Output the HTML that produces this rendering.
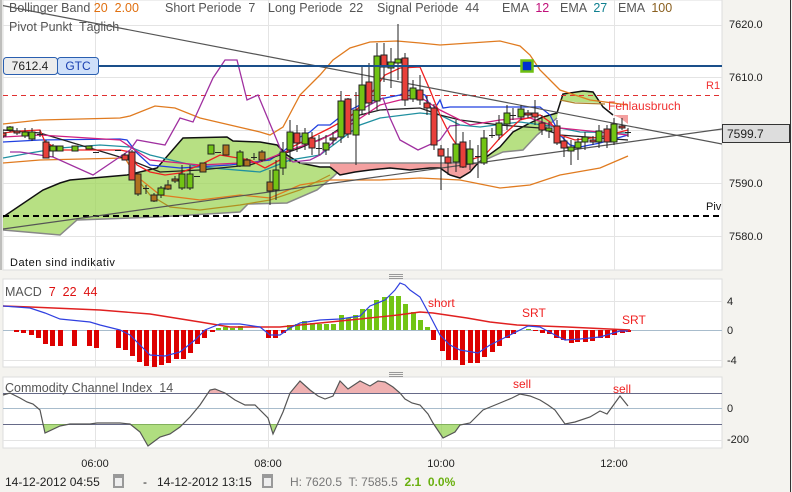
<!DOCTYPE html>
<html><head><meta charset="utf-8"><style>
html,body{margin:0;padding:0;background:#f4f3ef;}
svg{display:block;font-family:"Liberation Sans",sans-serif;}
text{white-space:pre;}
</style></head><body>
<svg width="792" height="492" viewBox="0 0 792 492" xmlns="http://www.w3.org/2000/svg" xml:space="preserve">
<defs>
<clipPath id="main"><rect x="3" y="0" width="719" height="270"/></clipPath>
<clipPath id="cciUp"><rect x="3" y="377" width="719" height="16"/></clipPath>
<clipPath id="cciDn"><rect x="3" y="424" width="719" height="24"/></clipPath>
</defs>
<rect width="792" height="492" fill="#f4f3ef"/>
<line x1="790.5" y1="0" x2="790.5" y2="492" stroke="#333"/>
<rect x="3" y="0" width="719" height="270" fill="#fff" stroke="#ddd"/>
<rect x="3" y="279" width="719" height="88" fill="#fff" stroke="#ddd"/>
<rect x="3" y="377" width="719" height="71" fill="#fff" stroke="#ddd"/>
<line x1="1" y1="0" x2="1" y2="270" stroke="#888"/>
<g stroke="#e4e4e4" stroke-width="1">
<line x1="95.5" y1="0" x2="95.5" y2="270"/><line x1="268.5" y1="0" x2="268.5" y2="270"/><line x1="441.5" y1="0" x2="441.5" y2="270"/><line x1="614.5" y1="0" x2="614.5" y2="270"/>
<line x1="95.5" y1="279" x2="95.5" y2="367"/><line x1="268.5" y1="279" x2="268.5" y2="367"/><line x1="441.5" y1="279" x2="441.5" y2="367"/><line x1="614.5" y1="279" x2="614.5" y2="367"/>
<line x1="95.5" y1="377" x2="95.5" y2="448"/><line x1="268.5" y1="377" x2="268.5" y2="448"/><line x1="441.5" y1="377" x2="441.5" y2="448"/><line x1="614.5" y1="377" x2="614.5" y2="448"/>
<line x1="3" y1="25.5" x2="722" y2="25.5"/><line x1="3" y1="77.5" x2="722" y2="77.5"/><line x1="3" y1="130.5" x2="722" y2="130.5"/><line x1="3" y1="183.5" x2="722" y2="183.5"/><line x1="3" y1="236.5" x2="722" y2="236.5"/>
<line x1="3" y1="301.5" x2="722" y2="301.5"/><line x1="3" y1="360.5" x2="722" y2="360.5"/>
<line x1="3" y1="440.5" x2="722" y2="440.5"/>
</g>
<g clip-path="url(#main)">
<polygon fill="#9fd55a" fill-opacity="0.75" points="3,217 43,190 60,183 70,180 127,175 157,168 183,138 227,137 233,141 260,142 277,145 287,155 300,163 320,167 335,167 340,170 333,177 317,190 287,203 248,204 240,212 157,217 77,220 60,235 3,230"/>
<polyline fill="none" stroke="#111" stroke-width="1.5" points="3,217 43,190 60,183 70,180 127,175 157,168 183,138 227,137 233,141 260,142 277,145 287,155 300,163 320,167 335,167"/>
<polyline fill="none" stroke="#888" stroke-width="1.5" points="3,230 60,235 77,220 157,217 240,212 248,204 287,203 317,190 333,177 340,170"/>
<polygon fill="#f4a0a0" points="330,163 478,163 470,172 460,178 450,175 440,168 410,170 390,168 370,170 355,172 340,175 330,167"/>
<polyline fill="none" stroke="#111" stroke-width="1.5" points="330,167 340,175 355,172 370,170 390,168 410,170 430,168 440,168 450,175 460,178 470,172 478,163"/>
<polygon fill="#9fd55a" fill-opacity="0.75" points="478,163 500,147 513,132 530,123 543,117 557,113 563,94 583,91 593,92 603,107 613,115 600,103 575,102 560,100 557,118 537,135 523,150 503,152"/>
<polyline fill="none" stroke="#111" stroke-width="1.5" points="478,163 500,147 513,132 530,123 543,117 557,113 563,94 583,91 593,92 603,107 613,115"/>
<polyline fill="none" stroke="#888" stroke-width="1.5" points="300,163 478,163 503,152 523,150 537,135 557,118"/>
<polygon fill="#f4a0a0" points="613,115 628,115 628,124 620,118"/>
<line x1="3" y1="95.5" x2="722" y2="95.5" stroke="#e03030" stroke-dasharray="5,4"/>
<line x1="3" y1="216" x2="722" y2="216" stroke="#000" stroke-width="2" stroke-dasharray="6,4"/>
<polyline fill="none" stroke="#e07b20" stroke-width="1.3" points="3,124 40,120 120,118 130,116 155,106 175,108 200,118 230,125 260,132 270,135 283,127 300,95 320,75 333,60 350,48 370,42 397,41 420,43 440,45 470,43 500,41 520,46 530,55 540,70 560,90 590,100 628,105"/>
<polyline fill="none" stroke="#e07b20" stroke-width="1.3" points="3,163 40,160 125,158 135,175 160,195 200,200 240,195 270,198 300,185 330,180 380,180 420,178 460,180 500,188 530,185 560,175 600,168 628,156"/>
<polyline fill="none" stroke="#b09020" stroke-width="1.2" points="130,170 150,195 170,207 200,210 240,205 270,200 300,190 330,175"/>
<polyline fill="none" stroke="#b08030" stroke-width="1.2" points="560,100 575,103 605,104"/>
<polyline fill="none" stroke="#2090a0" stroke-width="1.3" points="3,158 30,153 60,148 100,145 130,147 150,155 200,167 260,172 290,160 320,155 340,140 360,125 380,118 420,113 440,115 460,125 480,127 520,122 550,126 580,132 628,133"/>
<polyline fill="none" stroke="#2040e0" stroke-width="1.3" points="3,142 40,140 120,139 127,140 137,153 150,165 180,168 230,165 270,160 285,150 300,137 310,132 318,125 330,125 340,117 350,110 360,105 375,100 400,95 410,90 425,95 432,110 437,105 440,100 443,108 450,107 540,107 550,115 560,135 570,145 580,147 600,143 628,135"/>
<polyline fill="none" stroke="#222" stroke-width="1.3" points="3,130 40,133 130,160 160,172 200,170 250,165 280,155 300,148 330,135 360,115 380,110 420,108 440,115 460,120 500,125 540,128 560,135 600,138 628,140"/>
<polyline fill="none" stroke="#d02080" stroke-width="1.3" points="3,137 40,135 120,140 150,160 200,165 260,162 290,150 320,140 350,125 380,105 400,100 420,97 440,110 470,125 500,120 530,118 560,128 628,135"/>
<polyline fill="none" stroke="#f02020" stroke-width="1.3" points="3,133 20,131 40,130 45,142 60,150 120,150 130,152 137,165 150,172 165,175 180,173 200,165 220,155 250,160 265,168 280,160 290,148 310,138 330,128 350,117 370,95 385,75 400,68 420,67 430,90 440,115 450,135 460,150 470,160 485,155 500,138 520,120 540,115 550,122 560,135 575,140 600,137 628,130"/>
<polyline fill="none" stroke="#a030a0" stroke-width="1.3" points="10,152 20,152 53,157 93,175 130,150 137,140 165,145 180,118 193,122 213,78 225,60 237,60 247,100 258,95 283,155 293,162 310,160 320,155 340,135 360,110 383,98 390,118 400,140 418,150 440,140 450,126 460,125"/>
<line x1="0" y1="5" x2="722" y2="144" stroke="#555" stroke-width="1.2"/>
<line x1="3" y1="229" x2="722" y2="129" stroke="#555" stroke-width="1.2"/>
<g stroke="#222" stroke-width="1">
<line x1="3" y1="130" x2="3" y2="138"/><rect x="0" y="133" width="6" height="3" fill="#e8403a"/>
<line x1="10" y1="126" x2="10" y2="132"/><rect x="7" y="127" width="6" height="3" fill="#72c414"/>
<line x1="17" y1="128" x2="17" y2="135"/><rect x="14" y="131" width="6" height="2" fill="#e8403a"/>
<line x1="25" y1="128" x2="25" y2="138"/><rect x="22" y="132" width="6" height="4" fill="#72c414"/>
<line x1="32" y1="128" x2="32" y2="141"/><rect x="29" y="132" width="6" height="7" fill="#72c414"/>
<line x1="40" y1="130" x2="40" y2="137"/><line x1="37" y1="134.5" x2="43" y2="134.5"/>
<line x1="46" y1="140" x2="46" y2="158"/><rect x="43" y="142" width="6" height="16" fill="#e8403a"/>
<line x1="53" y1="144" x2="53" y2="157"/><rect x="50" y="146" width="6" height="5" fill="#72c414"/>
<rect x="57" y="146" width="6" height="5" fill="#72c414"/>
<rect x="72" y="146" width="6" height="5" fill="#72c414"/>
<rect x="86" y="146" width="6" height="3" fill="#72c414"/>
<line x1="93" y1="152.5" x2="99" y2="152.5"/><line x1="115" y1="150.5" x2="121" y2="150.5"/>
<line x1="125" y1="153" x2="125" y2="160"/><rect x="122" y="155" width="6" height="5" fill="#e8403a"/>
<line x1="132" y1="150" x2="132" y2="180"/><rect x="129" y="152" width="6" height="28" fill="#e8403a"/>
<line x1="138" y1="172" x2="138" y2="196"/><rect x="135" y="174" width="6" height="20" fill="#b07020"/>
<line x1="146" y1="185" x2="146" y2="194"/><line x1="143" y1="188.5" x2="149" y2="188.5"/>
<line x1="154" y1="193" x2="154" y2="202"/><rect x="151" y="195" width="6" height="6" fill="#b07020"/>
<line x1="161" y1="186" x2="161" y2="198"/><rect x="158" y="188" width="6" height="7" fill="#72c414"/>
<line x1="168" y1="180" x2="168" y2="190"/><rect x="165" y="185" width="6" height="4" fill="#b07020"/>
<line x1="175" y1="176" x2="175" y2="183"/><rect x="172" y="179" width="6" height="2" fill="#b07020"/>
<line x1="182" y1="165" x2="182" y2="190"/><rect x="179" y="174" width="6" height="14" fill="#72c414"/>
<line x1="190" y1="165" x2="190" y2="190"/><rect x="187" y="174" width="6" height="14" fill="#72c414"/>
<line x1="194" y1="176.5" x2="200" y2="176.5"/>
<rect x="200" y="163" width="6" height="9" fill="#b07020"/>
<rect x="208" y="145" width="6" height="9" fill="#72c414"/>
<line x1="215" y1="152.5" x2="221" y2="152.5"/>
<rect x="223" y="145" width="6" height="10" fill="#b07020"/>
<line x1="240" y1="150" x2="240" y2="167"/><rect x="237" y="152" width="6" height="14" fill="#72c414"/>
<line x1="247" y1="158" x2="247" y2="166"/><rect x="244" y="160" width="6" height="6" fill="#b07020"/>
<line x1="254" y1="153" x2="254" y2="160"/><line x1="251" y1="157.5" x2="257" y2="157.5"/>
<line x1="262" y1="150" x2="262" y2="162"/><rect x="259" y="152" width="6" height="8" fill="#b07020"/>
<line x1="270" y1="170" x2="270" y2="205"/><rect x="267" y="182" width="6" height="9" fill="#b07020"/>
<line x1="276" y1="160" x2="276" y2="200"/><rect x="273" y="170" width="6" height="20" fill="#72c414"/>
<line x1="283" y1="142" x2="283" y2="175"/><rect x="280" y="152" width="6" height="16" fill="#72c414"/>
<line x1="290" y1="120" x2="290" y2="162"/><rect x="287" y="132" width="6" height="18" fill="#72c414"/>
<line x1="297" y1="125" x2="297" y2="152"/><rect x="294" y="133" width="6" height="10" fill="#e8403a"/>
<line x1="305" y1="128" x2="305" y2="150"/><rect x="302" y="133" width="6" height="11" fill="#72c414"/>
<line x1="312" y1="132" x2="312" y2="155"/><rect x="309" y="138" width="6" height="10" fill="#e8403a"/>
<line x1="319" y1="135" x2="319" y2="155"/><line x1="316" y1="148.5" x2="322" y2="148.5"/>
<line x1="326" y1="135" x2="326" y2="155"/><rect x="323" y="143" width="6" height="7" fill="#72c414"/>
<line x1="333" y1="132" x2="333" y2="145"/><rect x="330" y="138" width="6" height="2" fill="#b07020"/>
<line x1="341" y1="91" x2="341" y2="143"/><rect x="338" y="101" width="6" height="36" fill="#72c414"/>
<line x1="348" y1="98" x2="348" y2="138"/><rect x="345" y="99" width="6" height="35" fill="#e8403a"/>
<line x1="356" y1="92" x2="356" y2="165"/><rect x="353" y="110" width="6" height="25" fill="#72c414"/>
<line x1="362" y1="65" x2="362" y2="115"/><rect x="359" y="85" width="6" height="25" fill="#72c414"/>
<line x1="369" y1="63" x2="369" y2="115"/><rect x="366" y="82" width="6" height="21" fill="#e8403a"/>
<line x1="377" y1="43" x2="377" y2="110"/><rect x="374" y="56" width="6" height="45" fill="#72c414"/>
<line x1="384" y1="43" x2="384" y2="82"/><rect x="381" y="55" width="6" height="12" fill="#e8403a"/>
<line x1="391" y1="48" x2="391" y2="88"/><rect x="388" y="62" width="6" height="6" fill="#72c414"/>
<line x1="398" y1="24" x2="398" y2="80"/><rect x="395" y="59" width="6" height="4" fill="#72c414"/>
<line x1="405" y1="53" x2="405" y2="106"/><rect x="402" y="58" width="6" height="42" fill="#e8403a"/>
<line x1="413" y1="80" x2="413" y2="102"/><rect x="410" y="88" width="6" height="11" fill="#72c414"/>
<line x1="420" y1="75" x2="420" y2="105"/><rect x="417" y="90" width="6" height="10" fill="#e8403a"/>
<line x1="427" y1="96" x2="427" y2="115"/><rect x="424" y="103" width="6" height="5" fill="#e8403a"/>
<line x1="434" y1="104" x2="434" y2="150"/><rect x="431" y="108" width="6" height="37" fill="#e8403a"/>
<line x1="441" y1="145" x2="441" y2="190"/><rect x="438" y="149" width="6" height="7" fill="#e8403a"/>
<line x1="448" y1="148" x2="448" y2="175"/><rect x="445" y="157" width="6" height="6" fill="#e8403a"/>
<line x1="456" y1="120" x2="456" y2="172"/><rect x="453" y="144" width="6" height="18" fill="#72c414"/>
<line x1="463" y1="132" x2="463" y2="168"/><rect x="460" y="142" width="6" height="25" fill="#e8403a"/>
<line x1="470" y1="140" x2="470" y2="170"/><rect x="467" y="149" width="6" height="15" fill="#72c414"/>
<line x1="478" y1="145" x2="478" y2="178"/><line x1="475" y1="156.5" x2="481" y2="156.5"/>
<line x1="484" y1="130" x2="484" y2="165"/><rect x="481" y="138" width="6" height="25" fill="#72c414"/>
<line x1="492" y1="128" x2="492" y2="138"/><line x1="489" y1="135.5" x2="495" y2="135.5"/>
<line x1="499" y1="115" x2="499" y2="140"/><rect x="496" y="123" width="6" height="12" fill="#72c414"/>
<line x1="507" y1="105" x2="507" y2="130"/><rect x="504" y="113" width="6" height="11" fill="#72c414"/>
<line x1="513" y1="108" x2="513" y2="120"/><line x1="510" y1="115.5" x2="516" y2="115.5"/>
<line x1="521" y1="105" x2="521" y2="120"/><rect x="518" y="109" width="6" height="8" fill="#72c414"/>
<line x1="528" y1="110" x2="528" y2="118"/><rect x="525" y="113" width="6" height="2" fill="#e8403a"/>
<line x1="535" y1="100" x2="535" y2="125"/><rect x="532" y="113" width="6" height="4" fill="#e8403a"/>
<line x1="542" y1="115" x2="542" y2="135"/><rect x="539" y="123" width="6" height="7" fill="#e8403a"/>
<line x1="549" y1="122" x2="549" y2="138"/><rect x="546" y="128" width="6" height="3" fill="#72c414"/>
<line x1="557" y1="120" x2="557" y2="145"/><rect x="554" y="126" width="6" height="17" fill="#e8403a"/>
<line x1="564" y1="137" x2="564" y2="157"/><rect x="561" y="141" width="6" height="7" fill="#e8403a"/>
<line x1="571" y1="140" x2="571" y2="165"/><rect x="568" y="147" width="6" height="4" fill="#72c414"/>
<line x1="578" y1="138" x2="578" y2="160"/><rect x="575" y="142" width="6" height="6" fill="#72c414"/>
<line x1="585" y1="132" x2="585" y2="150"/><rect x="582" y="137" width="6" height="5" fill="#72c414"/>
<line x1="593" y1="136" x2="593" y2="145"/><rect x="590" y="140" width="6" height="2" fill="#e8403a"/>
<line x1="599" y1="125" x2="599" y2="148"/><rect x="596" y="131" width="6" height="11" fill="#72c414"/>
<line x1="607" y1="125" x2="607" y2="148"/><rect x="604" y="129" width="6" height="13" fill="#e8403a"/>
<line x1="614" y1="118" x2="614" y2="145"/><rect x="611" y="124" width="6" height="18" fill="#72c414"/>
<line x1="622" y1="118" x2="622" y2="130"/><rect x="619" y="126" width="6" height="2" fill="#e8403a"/>
<line x1="628" y1="128" x2="628" y2="137"/><line x1="625" y1="132.5" x2="631" y2="132.5"/>
</g>
</g>
<line x1="98" y1="66" x2="722" y2="66" stroke="#1a4f8a" stroke-width="2"/>
<rect x="521.5" y="60.5" width="11" height="11" fill="#0030d0" stroke="#6ec010" stroke-width="2.5"/>
<rect x="3.5" y="57.5" width="54" height="17" fill="#ececec" stroke="#2a5fb0" rx="3"/>
<rect x="57.5" y="57.5" width="41" height="17" fill="#cfe0fa" stroke="#2a5fb0" rx="3"/>
<text x="30" y="70" font-size="12" fill="#222" text-anchor="middle">7612.4</text>
<text x="78" y="70" font-size="12" fill="#1a3fb0" text-anchor="middle">GTC</text>
<g font-size="12.5" fill="#555">
<text x="9" y="12">Bollinger Band <tspan fill="#e07010">20  2.00</tspan></text>
<text x="165" y="12">Short Periode  7</text>
<text x="268" y="12">Long Periode  22</text>
<text x="377" y="12">Signal Periode  44</text>
<text x="502" y="12">EMA  <tspan fill="#c0107a">12</tspan></text>
<text x="560" y="12">EMA  <tspan fill="#108090">27</tspan></text>
<text x="618" y="12">EMA  <tspan fill="#8a6020">100</tspan></text>
<text x="9" y="31">Pivot Punkt  Täglich</text>
</g>
<text x="10" y="266" font-size="11" fill="#111" letter-spacing="0.5">Daten sind indikativ</text>
<text x="608" y="110" font-size="12" fill="#f03030">Fehlausbruch</text>
<text x="706" y="89" font-size="11" fill="#f03030">R1</text>
<text x="706" y="210" font-size="11" fill="#111">Piv</text>
<g font-size="11" fill="#222">
<text x="729" y="28">7620.0</text><text x="729" y="81">7610.0</text><text x="729" y="187">7590.0</text><text x="729" y="240">7580.0</text>
</g>
<rect x="722.5" y="124.5" width="67" height="18" fill="#ddd" stroke="#333"/>
<text x="727" y="138" font-size="12" fill="#222">7599.7</text>
<line x1="3" y1="330.5" x2="722" y2="330.5" stroke="#a8bccc"/>
<g fill="#dd0000">
<rect x="14" y="330" width="5" height="2"/><rect x="21" y="330" width="5" height="3"/><rect x="29" y="330" width="5" height="5"/><rect x="36" y="330" width="5" height="8"/><rect x="43" y="330" width="5" height="14"/><rect x="50" y="330" width="5" height="16"/><rect x="58" y="330" width="5" height="16"/><rect x="72" y="330" width="5" height="16"/><rect x="87" y="330" width="5" height="16"/><rect x="94" y="330" width="5" height="18"/><rect x="116" y="330" width="5" height="18"/><rect x="123" y="330" width="5" height="20"/><rect x="130" y="330" width="5" height="26"/><rect x="137" y="330" width="5" height="32"/><rect x="144" y="330" width="5" height="36"/><rect x="152" y="330" width="5" height="37"/><rect x="159" y="330" width="5" height="35"/><rect x="166" y="330" width="5" height="33"/><rect x="174" y="330" width="5" height="29"/><rect x="181" y="330" width="5" height="29"/><rect x="188" y="330" width="5" height="23"/><rect x="195" y="330" width="5" height="14"/><rect x="202" y="330" width="5" height="8"/><rect x="210" y="330" width="5" height="2"/>
<rect x="266" y="330" width="5" height="8"/><rect x="273" y="330" width="5" height="8"/><rect x="281" y="330" width="5" height="3"/>
<rect x="431" y="330" width="5" height="10"/><rect x="440" y="330" width="5" height="21"/><rect x="446" y="330" width="5" height="30"/><rect x="453" y="330" width="5" height="30"/><rect x="460" y="330" width="5" height="35"/><rect x="468" y="330" width="5" height="33"/><rect x="475" y="330" width="5" height="33"/><rect x="482" y="330" width="5" height="27"/><rect x="490" y="330" width="5" height="22"/><rect x="497" y="330" width="5" height="16"/><rect x="505" y="330" width="5" height="8"/><rect x="511" y="330" width="5" height="4"/>
<rect x="533" y="330" width="5" height="1"/><rect x="540" y="330" width="5" height="3"/><rect x="547" y="330" width="5" height="4"/><rect x="554" y="330" width="5" height="8"/><rect x="561" y="330" width="5" height="10"/><rect x="569" y="330" width="5" height="13"/><rect x="575" y="330" width="5" height="12"/><rect x="583" y="330" width="5" height="12"/><rect x="590" y="330" width="5" height="11"/><rect x="598" y="330" width="5" height="8"/><rect x="605" y="330" width="5" height="8"/><rect x="612" y="330" width="5" height="5"/><rect x="620" y="330" width="5" height="3"/><rect x="626" y="330" width="5" height="2"/>
</g>
<g fill="#72c414">
<rect x="216" y="328" width="5" height="2"/><rect x="223" y="327" width="5" height="3"/><rect x="230" y="328" width="5" height="2"/><rect x="238" y="326" width="5" height="4"/>
<rect x="287" y="325" width="5" height="5"/><rect x="295" y="324" width="5" height="6"/><rect x="302" y="321" width="5" height="9"/><rect x="310" y="323" width="5" height="7"/><rect x="317" y="324" width="5" height="6"/><rect x="324" y="324" width="5" height="6"/><rect x="331" y="324" width="5" height="6"/><rect x="339" y="315" width="5" height="15"/><rect x="346" y="318" width="5" height="12"/><rect x="353" y="315" width="5" height="15"/><rect x="360" y="309" width="5" height="21"/><rect x="367" y="309" width="5" height="21"/><rect x="374" y="300" width="5" height="30"/><rect x="382" y="297" width="5" height="33"/><rect x="389" y="296" width="5" height="34"/><rect x="396" y="296" width="5" height="34"/><rect x="403" y="304" width="5" height="26"/><rect x="411" y="312" width="5" height="18"/><rect x="418" y="320" width="5" height="10"/><rect x="425" y="327" width="5" height="3"/><rect x="526" y="329" width="5" height="1"/>
</g>
<polyline fill="none" stroke="#e02020" stroke-width="1.4" points="3,306 30,307 100,310 150,314 200,322 230,327 280,327 300,325 350,320 398,315 420,312 433,313 467,318 490,322 517,325 567,327 630,330"/>
<polyline fill="none" stroke="#3040e0" stroke-width="1.2" points="3,306 30,308 45,313 60,319 90,322 100,325 120,330 130,335 140,345 150,355 165,356 180,352 195,340 205,330 220,324 240,324 260,327 270,335 280,335 290,328 300,323 320,320 340,319 360,316 370,306 385,300 395,290 400,283 405,285 410,290 420,297 427,310 440,335 450,345 460,350 478,353 490,345 510,335 528,326 540,327 555,335 565,340 580,339 600,337 620,331 628,331"/>
<text x="5" y="296" font-size="12.5" fill="#555">MACD  <tspan fill="#dd1010">7  22  44</tspan></text>
<text x="428" y="307" font-size="12" fill="#f02020">short</text>
<text x="522" y="317" font-size="12" fill="#f02020">SRT</text>
<text x="622" y="324" font-size="12" fill="#f02020">SRT</text>
<g font-size="11" fill="#222"><text x="727" y="305">4</text><text x="727" y="334">0</text><text x="727" y="364">-4</text><text x="727" y="412">0</text><text x="727" y="443">-200</text></g>
<g stroke="#999"><line x1="389" y1="274.5" x2="403" y2="274.5"/><line x1="389" y1="276.5" x2="403" y2="276.5"/><line x1="389" y1="278.5" x2="403" y2="278.5"/>
<line x1="389" y1="372.5" x2="403" y2="372.5"/><line x1="389" y1="374.5" x2="403" y2="374.5"/><line x1="389" y1="376.5" x2="403" y2="376.5"/></g>
<line x1="3" y1="408.5" x2="722" y2="408.5" stroke="#a8bccc"/>
<line x1="3" y1="393.5" x2="722" y2="393.5" stroke="#666a88"/>
<line x1="3" y1="424.5" x2="722" y2="424.5" stroke="#666a88"/>
<polygon clip-path="url(#cciDn)" fill="#8fd04a" fill-opacity="0.7" points="3,424 3,395 10,393 20,398 27,402 33,404 40,410 45,433 60,426 70,424 90,424 97,423 120,423 130,424 140,432 148,446 160,437 170,434 180,427 190,417 200,405 210,396 215,395 225,396 235,400 245,405 255,405 268,418 273,434 283,412 290,393 300,387 310,390 318,398 325,400 333,396 340,396 348,387 360,386 370,386 378,387 385,390 393,390 400,393 405,399 412,403 420,405 428,414 433,423 443,438 455,432 460,425 470,423 483,410 500,403 512,398 520,394 530,396 540,400 548,405 555,410 565,424 575,422 590,417 600,411 607,414 620,396 628,406 628,424"/>
<polygon clip-path="url(#cciUp)" fill="#e89090" fill-opacity="0.7" points="3,393 3,395 10,393 20,398 27,402 33,404 40,410 45,433 60,426 70,424 90,424 97,423 120,423 130,424 140,432 148,446 160,437 170,434 180,427 190,417 200,405 210,390 215,389 225,393 235,400 245,405 255,405 268,418 273,434 283,412 290,393 300,381 310,390 318,396 325,399 333,396 340,381 348,389 360,381 370,386 378,381 385,382 393,387 400,393 405,399 412,403 420,405 428,414 433,423 443,438 455,432 460,425 470,423 483,410 500,403 512,398 520,394 530,396 540,400 548,405 555,410 565,424 575,422 590,417 600,411 607,414 620,396 628,406 628,393"/>
<polyline fill="none" stroke="#555" stroke-width="1.2" points="3,395 10,393 20,398 27,402 33,404 40,410 45,433 60,426 70,424 90,424 97,423 120,423 130,424 140,432 148,446 160,437 170,434 180,427 190,417 200,405 210,390 215,389 225,393 235,400 245,405 255,405 268,418 273,434 283,412 290,393 300,381 310,390 318,396 325,399 333,396 340,381 348,389 360,381 370,386 378,381 385,382 393,387 400,393 405,399 412,403 420,405 428,414 433,423 443,438 455,432 460,425 470,423 483,410 500,403 512,398 520,394 530,396 540,400 548,405 555,410 565,424 575,422 590,417 600,411 607,414 620,396 628,406"/>
<text x="5" y="392" font-size="12.5" fill="#555">Commodity Channel Index  14</text>
<text x="513" y="388" font-size="12" fill="#f02020">sell</text>
<text x="613" y="393" font-size="12" fill="#f02020">sell</text>
<g font-size="11" fill="#222" text-anchor="middle"><text x="95" y="467">06:00</text><text x="268" y="467">08:00</text><text x="441" y="467">10:00</text><text x="614" y="467">12:00</text></g>
<g font-size="12" fill="#222">
<text x="5" y="486">14-12-2012 04:55</text>
<text x="143" y="486">-</text>
<text x="157" y="486">14-12-2012 13:15</text>
<text x="290" y="486" fill="#777">H: 7620.5  T: 7585.5  <tspan fill="#6ab010" font-weight="bold">2.1  0.0%</tspan></text>
</g>
<g fill="#999"><rect x="113" y="474" width="11" height="14"/><rect x="262" y="474" width="11" height="14"/></g>
<g fill="#eee"><rect x="115" y="478" width="7" height="8"/><rect x="264" y="478" width="7" height="8"/></g>
</svg>
</body></html>
